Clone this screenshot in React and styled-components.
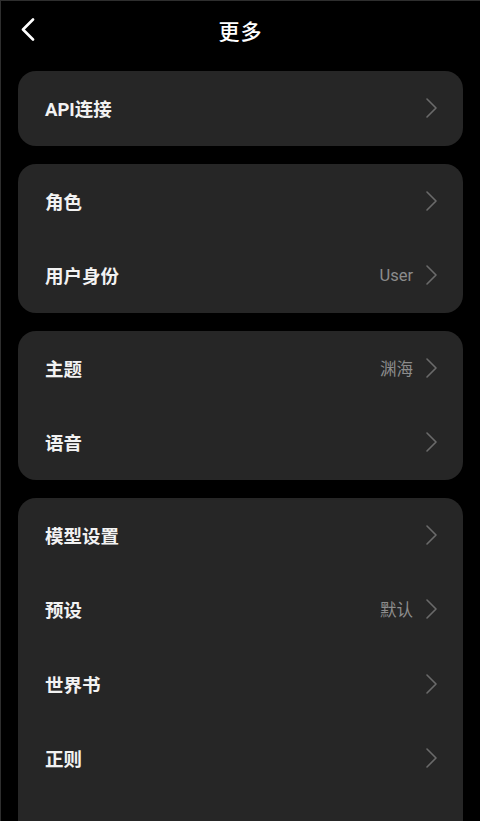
import React from "react";
import styled, { createGlobalStyle } from "styled-components";

const GlobalStyle = createGlobalStyle`
  html, body {
    margin: 0;
    padding: 0;
    background: #000;
  }
  body {
    font-family: Roboto, "Noto Sans CJK SC", sans-serif;
    -webkit-font-smoothing: antialiased;
  }
`;

const Page = styled.div`
  width: 480px;
  height: 821px;
  overflow: hidden;
  background: #000;
  color: #fff;
  box-sizing: border-box;
  border-top: 1px solid #2e2e2e;
  border-left: 1px solid #2e2e2e;
`;

const TopBar = styled.header`
  position: relative;
  height: 57px;
  display: flex;
  align-items: center;
  justify-content: center;
`;

const BackButton = styled.button`
  position: absolute;
  left: 14px;
  top: 11px;
  width: 26px;
  height: 34px;
  padding: 0;
  border: 0;
  background: none;
  display: flex;
  align-items: center;
  justify-content: center;
  cursor: pointer;
`;

const Title = styled.h1`
  margin: 0;
  font-size: 21px;
  font-weight: 500;
  letter-spacing: 1px;
`;

const List = styled.div`
  display: flex;
  flex-direction: column;
  gap: 18px;
  padding: 13px 17px 0 17px;
`;

const Card = styled.section`
  background: #262626;
  border-radius: 18px;
  display: flex;
  flex-direction: column;
  padding-bottom: ${(p) => (p.$open ? "60px" : "0")};
`;

const Row = styled.div`
  height: 74.5px;
  display: flex;
  align-items: center;
  padding: 0 26px 0 27px;
  cursor: pointer;
`;

const Label = styled.span`
  flex: 1;
  font-size: 18.5px;
  font-weight: 700;
  color: #f2f2f2;
`;

const Value = styled.span`
  font-size: 16.5px;
  color: #8c8c8c;
  margin-right: 13px;
`;

const Chevron = ({ color = "#6a6a6a" }) => (
  <svg width="11" height="20" viewBox="0 0 11 20" fill="none">
    <path
      d="M1 1 L10 10 L1 19"
      stroke={color}
      strokeWidth="1.6"
      strokeLinecap="round"
      strokeLinejoin="round"
    />
  </svg>
);

const groups = [
  [{ label: "API连接" }],
  [{ label: "角色" }, { label: "用户身份", value: "User" }],
  [{ label: "主题", value: "渊海" }, { label: "语音" }],
  [
    { label: "模型设置" },
    { label: "预设", value: "默认" },
    { label: "世界书" },
    { label: "正则" },
  ],
];

const App = () => {
  return (
    <Page>
      <GlobalStyle />
      <TopBar>
        <BackButton aria-label="返回">
          <svg width="14" height="23" viewBox="0 0 14 23" fill="none">
            <path
              d="M12 1.5 L2 11.5 L12 21.5"
              stroke="#fff"
              strokeWidth="2.6"
              strokeLinecap="round"
              strokeLinejoin="round"
            />
          </svg>
        </BackButton>
        <Title>更多</Title>
      </TopBar>
      <List>
        {groups.map((items, gi) => (
          <Card key={gi} $open={gi === groups.length - 1}>
            {items.map((item) => (
              <Row key={item.label}>
                <Label>{item.label}</Label>
                {item.value && <Value>{item.value}</Value>}
                <Chevron />
              </Row>
            ))}
          </Card>
        ))}
      </List>
    </Page>
  );
};

export default App;
